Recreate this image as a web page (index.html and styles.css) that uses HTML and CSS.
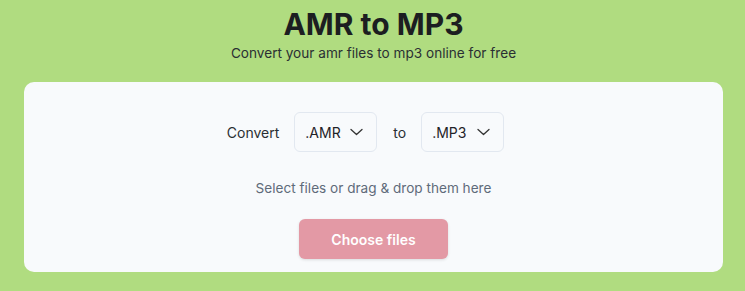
FILE: index.html
```html
<!DOCTYPE html>
<html lang="en">
<head>
  <meta charset="UTF-8">
  <meta name="viewport" content="width=device-width, initial-scale=1.0">
  <title>AMR to MP3</title>
  <link rel="stylesheet" href="styles.css">
</head>
<body>
  <header class="hero">
    <h1>AMR to MP3</h1>
    <p class="subtitle">Convert your amr files to mp3 online for free</p>
  </header>

  <main class="card">
    <div class="convert-row">
      <span class="label">Convert</span>
      <div class="select">
        <span>.AMR</span>
        <svg width="13" height="8" viewBox="0 0 13 8" fill="none" stroke="currentColor" stroke-width="1.3" stroke-linecap="round" stroke-linejoin="round"><path d="M1 1.5l5.5 5 5.5-5"/></svg>
      </div>
      <span class="label to">to</span>
      <div class="select">
        <span>.MP3</span>
        <svg width="13" height="8" viewBox="0 0 13 8" fill="none" stroke="currentColor" stroke-width="1.3" stroke-linecap="round" stroke-linejoin="round"><path d="M1 1.5l5.5 5 5.5-5"/></svg>
      </div>
    </div>

    <p class="hint">Select files or drag &amp; drop them here</p>

    <button type="button" class="choose">Choose files</button>
  </main>
</body>
</html>
```

FILE: styles.css
```css
* {
  margin: 0;
  padding: 0;
  box-sizing: border-box;
}
body {
  font-family: Inter, 'Noto Sans', sans-serif;
  background-color: #b0dc80;
  color: #1f2328;
  padding: 0 22px 0 24px;
  height: 291px;
  overflow: hidden;
}
.hero {
  text-align: center;
  padding-top: 6px;
}
h1 {
  font-size: 30px;
  font-weight: 700;
  line-height: 36px;
  color: #1c1e21;
}
.subtitle {
  font-size: 13.6px;
  line-height: 20px;
  margin-top: 1px;
  color: #2a2f33;
}
.card {
  margin-top: 19px;
  height: 190px;
  background-color: #f8fafc;
  border-radius: 10px;
  display: flex;
  flex-direction: column;
  align-items: center;
  padding-top: 30px;
}
.convert-row {
  display: flex;
  align-items: center;
  font-size: 14px;
  color: #2a2f33;
  margin-right: 16px;
}
.label {
  margin-right: 15px;
}
.label.to {
  margin-left: 16px;
}
.select {
  width: 83px;
  height: 40px;
  border: 1px solid #e2e8f0;
  border-radius: 6px;
  background-color: #f8fafc;
  display: flex;
  align-items: center;
  justify-content: space-between;
  padding: 0 13px 0 10px;
  font-size: 14px;
  color: #1f2328;
}
.select svg {
  color: #333;
}
.hint {
  margin-top: 26px;
  font-size: 13.6px;
  line-height: 20px;
  color: #5f6b7a;
}
.choose {
  margin-top: 21px;
  width: 149px;
  height: 40px;
  border: none;
  border-radius: 6px;
  background-color: #e399a5;
  color: #fff;
  font-family: inherit;
  font-size: 14px;
  font-weight: 600;
  box-shadow: 0 1px 3px rgba(0, 0, 0, 0.12);
  cursor: pointer;
}
```
